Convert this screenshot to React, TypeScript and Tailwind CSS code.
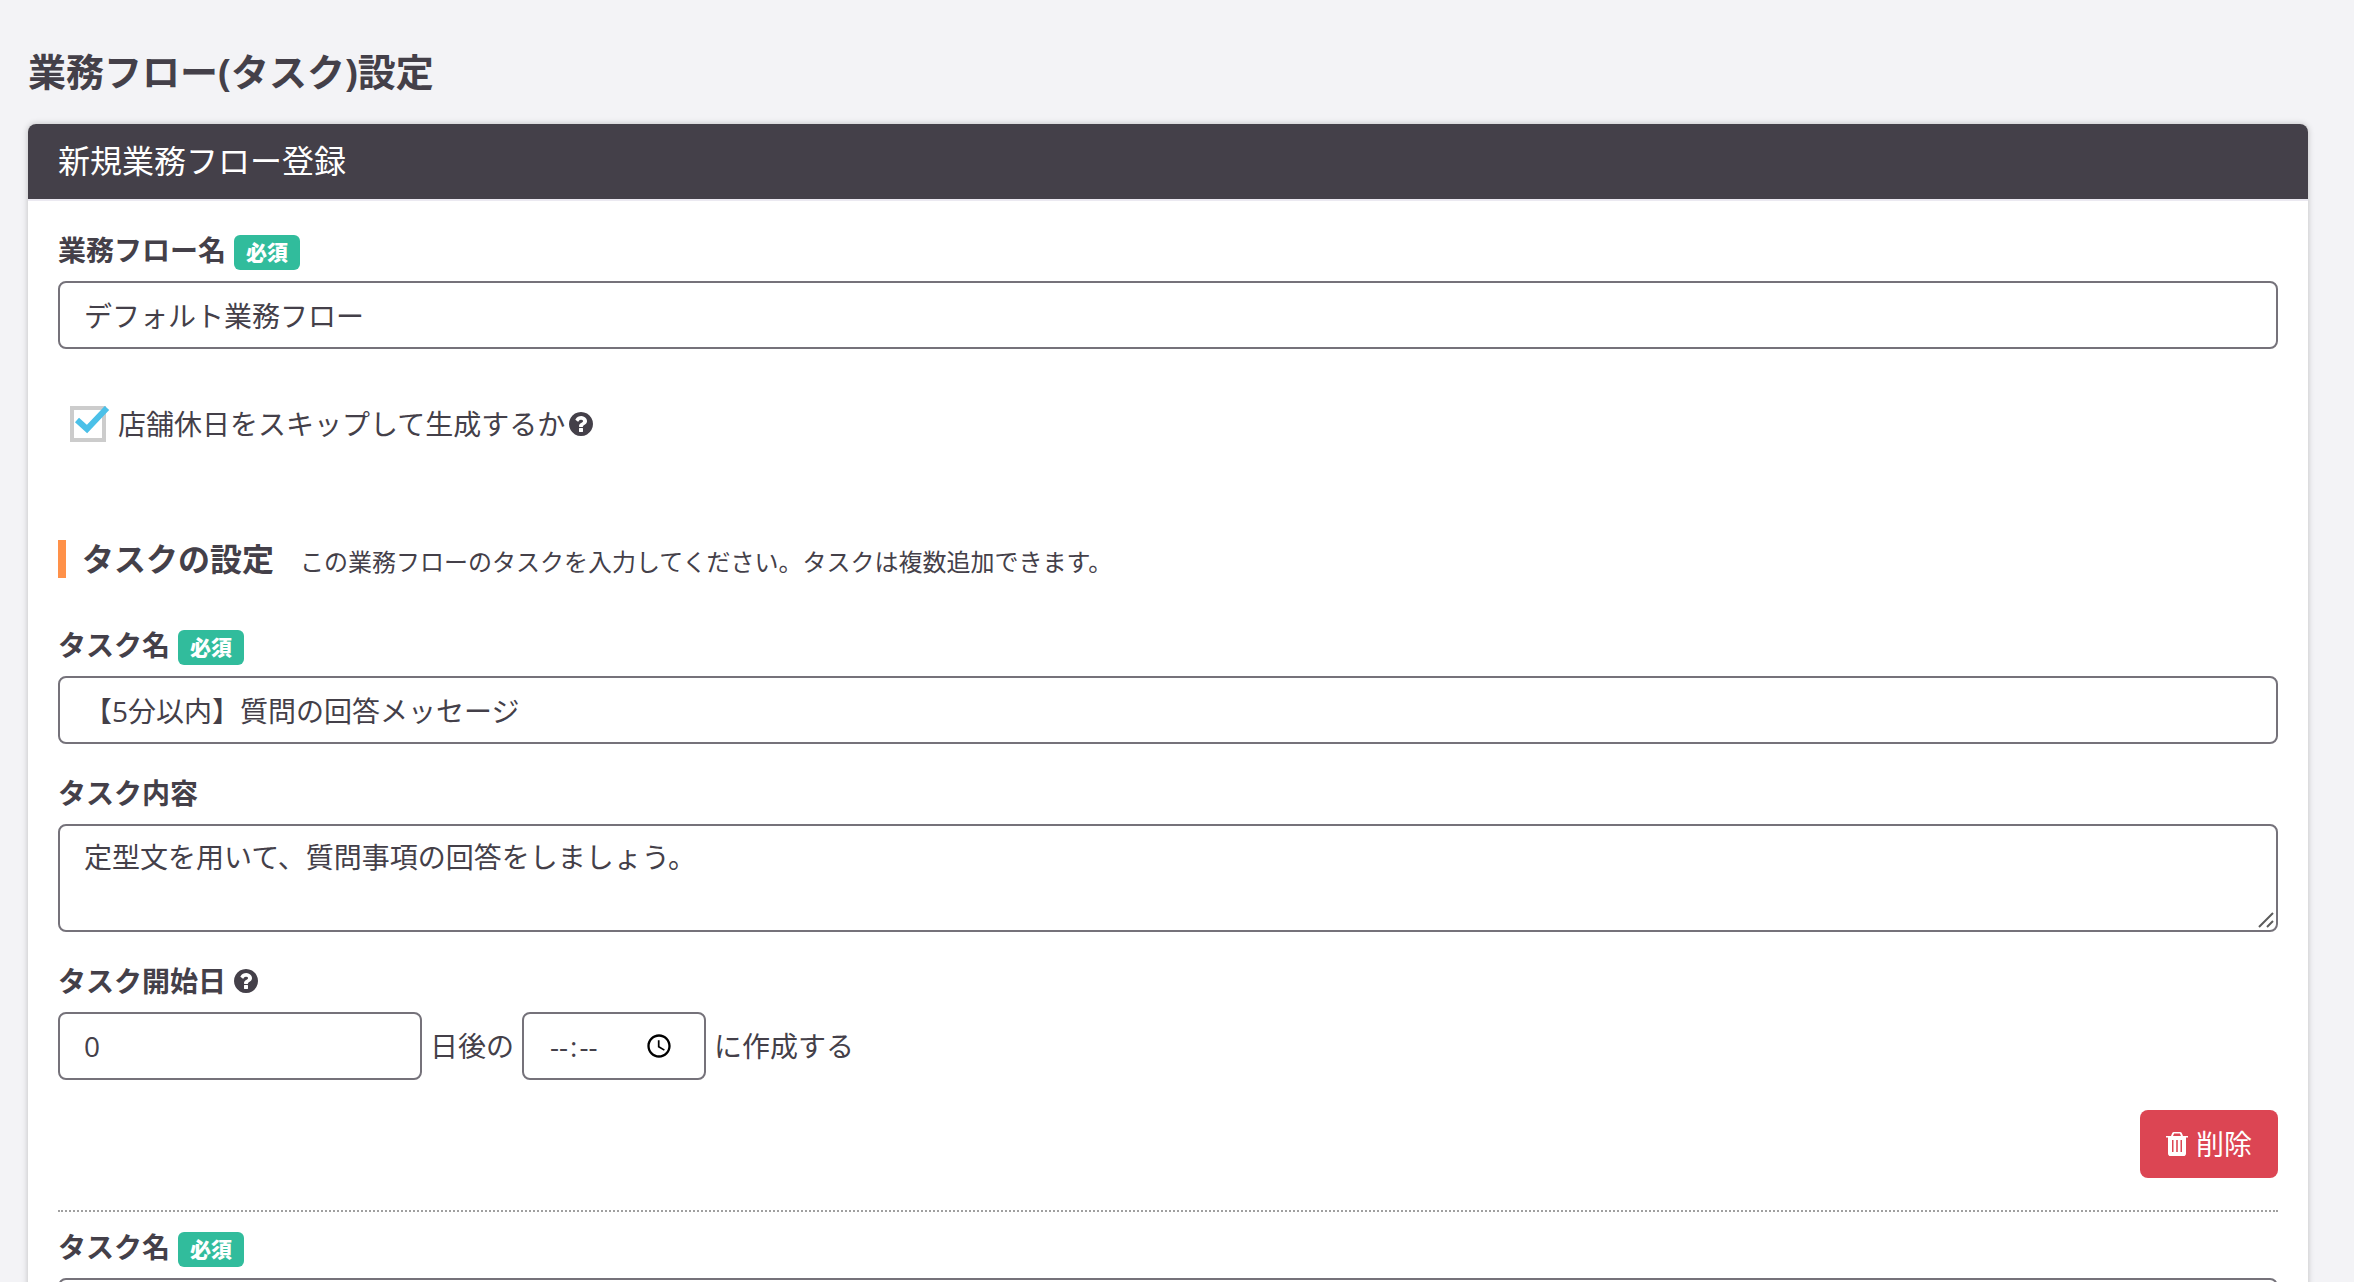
import { useState } from 'react';

interface Task {
  id: number;
  name: string;
  content: string;
  days: string;
  time: string;
}

const initialTasks: Task[] = [
  {
    id: 1,
    name: '【5分以内】質問の回答メッセージ',
    content: '定型文を用いて、質問事項の回答をしましょう。',
    days: '0',
    time: '',
  },
  { id: 2, name: '', content: '', days: '0', time: '' },
];

const controlClass =
  'block h-[68px] rounded-lg border-2 border-[#75727a] bg-white px-6 text-[28px] leading-[42px] text-[#444049] focus:outline-none focus:border-[#4bc0e8]';

function RequiredBadge() {
  return (
    <span className="mt-1 inline-flex h-[35px] items-center rounded-md bg-[#31bc9c] px-3 text-[21px] leading-none font-black text-white">
      必須
    </span>
  );
}

function HelpIcon() {
  return (
    <svg viewBox="0 0 1536 1536" className="h-6 w-6 shrink-0 fill-current" aria-hidden="true">
      <path d="M896 1248v-192q0-14-9-23t-23-9H672q-14 0-23 9t-9 23v192q0 14 9 23t23 9h192q14 0 23-9t9-23zm256-672q0-88-55.5-163T958 297t-170-41q-243 0-371 213-15 24 8 42l132 100q7 6 19 6 16 0 25-12 53-68 86-92 34-24 86-24 48 0 85.500 26t37.500 59q0 38-20 61t-68 45q-63 28-115.500 86.500T640 892v36q0 14 9 23t23 9h192q14 0 23-9t9-23q0-19 21.500-49.500T972 829q32-18 49-28.500t46-35 44.500-48 28-60.500 12.500-81zm384 192q0 209-103 385.500T1153.500 1433 768 1536t-385.500-103T103 1153.500 0 768t103-385.500T382.500 103 768 0t385.500 103T1433 382.500 1536 768z" />
    </svg>
  );
}

function TrashIcon() {
  return (
    <svg viewBox="0 0 22 24" className="h-6 w-[22px] shrink-0" aria-hidden="true">
      <path
        fill="currentColor"
        fillRule="evenodd"
        d="M8 0h6q1.400 0 1.900 1.300L17 4h5v1.500h-2v15.700Q20 24 17.500 24h-13Q2 24 2 21.200V5.500H0V4h5l1.100-2.700Q6.600 0 8 0zM8.100 1.500L7 4h8l-1.100-2.500zM6 8v12h1.500V8zm4.200 0v12h1.600V8zm4.300 0v12H16V8z"
      />
    </svg>
  );
}

interface TaskFieldsProps {
  task: Task;
  onChange: (task: Task) => void;
  onDelete: () => void;
}

function TaskFields({ task, onChange, onDelete }: TaskFieldsProps) {
  return (
    <div className="mb-3.5 border-b-2 border-dotted border-[#a0a0a0] pb-8 last:border-b-0">
      <div className="mb-7">
        <label htmlFor={`name-${task.id}`} className="mb-2.5 flex h-[42px] items-center gap-2 font-bold">
          タスク名
          <RequiredBadge />
        </label>
        <input
          id={`name-${task.id}`}
          type="text"
          value={task.name}
          onChange={(e) => onChange({ ...task, name: e.target.value })}
          className={`${controlClass} w-full`}
        />
      </div>

      {/* the remaining fields open once the task has a name */}
      {task.name && (
        <>
          <div className="mb-7">
            <label htmlFor={`content-${task.id}`} className="mb-2.5 block font-bold">
              タスク内容
            </label>
            <div className="relative">
              <textarea
                id={`content-${task.id}`}
                value={task.content}
                onChange={(e) => onChange({ ...task, content: e.target.value })}
                className="block h-[108px] w-full resize-none rounded-lg border-2 border-[#75727a] bg-white px-6 py-2.5 leading-[42px] text-[#444049] focus:outline-none"
              />
              <svg
                viewBox="0 0 16 16"
                className="pointer-events-none absolute right-1 bottom-1 h-4 w-4 stroke-[#5c5c5c] stroke-2"
                aria-hidden="true"
              >
                <path d="M1 15 15 1M9 15l6-6" />
              </svg>
            </div>
          </div>

          <label htmlFor={`days-${task.id}`} className="mb-2.5 flex items-center gap-2 font-bold">
            タスク開始日
            <HelpIcon />
          </label>
          <div className="mb-[30px] flex items-center gap-2">
            <input
              id={`days-${task.id}`}
              type="text"
              inputMode="numeric"
              value={task.days}
              onChange={(e) => onChange({ ...task, days: e.target.value })}
              className={`${controlClass} w-[364px]`}
            />
            <label htmlFor={`time-${task.id}`}>日後の</label>
            <input
              id={`time-${task.id}`}
              type="time"
              value={task.time}
              onChange={(e) => onChange({ ...task, time: e.target.value })}
              className={`${controlClass} w-[184px] [&::-webkit-calendar-picker-indicator]:mr-1 [&::-webkit-calendar-picker-indicator]:h-7 [&::-webkit-calendar-picker-indicator]:w-7 [&::-webkit-datetime-edit-ampm-field]:hidden [&::-webkit-datetime-edit-hour-field]:px-0.5 [&::-webkit-datetime-edit-minute-field]:px-0.5`}
            />
            <span>に作成する</span>
          </div>

          <div className="flex justify-end">
            <button
              type="button"
              onClick={onDelete}
              className="flex h-[68px] items-center gap-2 rounded-lg bg-[#dc4553] px-[26px] text-white hover:bg-[#c93543]"
            >
              <TrashIcon />
              削除
            </button>
          </div>
        </>
      )}
    </div>
  );
}

export default function App() {
  const [flowName, setFlowName] = useState('デフォルト業務フロー');
  const [skipHolidays, setSkipHolidays] = useState(true);
  const [tasks, setTasks] = useState(initialTasks);

  const updateTask = (task: Task) => {
    setTasks(tasks.map((t) => (t.id === task.id ? task : t)));
  };

  return (
    <div className="min-h-screen bg-[#f3f3f6] pr-[46px] pl-7 font-['Open_Sans','Noto_Sans_CJK_JP',sans-serif] text-[28px] leading-[42px] text-[#444049]">
      <h1 className="pt-[43px] pb-[25px] text-[38px] leading-[56px] font-bold">業務フロー(タスク)設定</h1>

      <div className="rounded-lg bg-white shadow-[0_0_6px_rgba(0,0,0,0.22)]">
        <div className="rounded-t-lg border-b-2 border-[#ebe9f1] bg-[#444049] bg-clip-padding px-[30px] pt-[13px] pb-[15px] text-[32px] leading-[47px] text-white">
          新規業務フロー登録
        </div>

        <form className="px-[30px] py-7" onSubmit={(e) => e.preventDefault()}>
          <label htmlFor="flow-name" className="mb-2.5 flex h-[42px] items-center gap-2 font-bold">
            業務フロー名
            <RequiredBadge />
          </label>
          <input
            id="flow-name"
            type="text"
            value={flowName}
            onChange={(e) => setFlowName(e.target.value)}
            className={`${controlClass} w-full`}
          />

          <div className="mt-[54px] ml-3 flex items-center gap-1">
            <label className="flex items-center gap-3">
              <span className="relative h-9 w-9">
                <input
                  type="checkbox"
                  checked={skipHolidays}
                  onChange={(e) => setSkipHolidays(e.target.checked)}
                  className="block h-9 w-9 appearance-none border-4 border-[#ccc] bg-white"
                />
                {skipHolidays && (
                  <svg
                    viewBox="0 0 40 40"
                    className="pointer-events-none absolute top-0 left-0 h-10 w-10 fill-none stroke-[#4bc0e8] stroke-[6]"
                    aria-hidden="true"
                  >
                    <path d="M7 14l10 9L37 2" />
                  </svg>
                )}
              </span>
              店舗休日をスキップして生成するか
            </label>
            <HelpIcon />
          </div>

          <div className="mt-[95px] mb-[43px] flex items-baseline">
            <h2 className="border-l-8 border-[#ff9149] pl-4 text-[32px] leading-[38px] font-bold">タスクの設定</h2>
            <span className="pl-[26px] text-2xl leading-[38px]">
              この業務フローのタスクを入力してください。タスクは複数追加できます。
            </span>
          </div>

          {tasks.map((task) => (
            <TaskFields
              key={task.id}
              task={task}
              onChange={updateTask}
              onDelete={() => setTasks(tasks.filter((t) => t.id !== task.id))}
            />
          ))}
        </form>
      </div>
    </div>
  );
}
